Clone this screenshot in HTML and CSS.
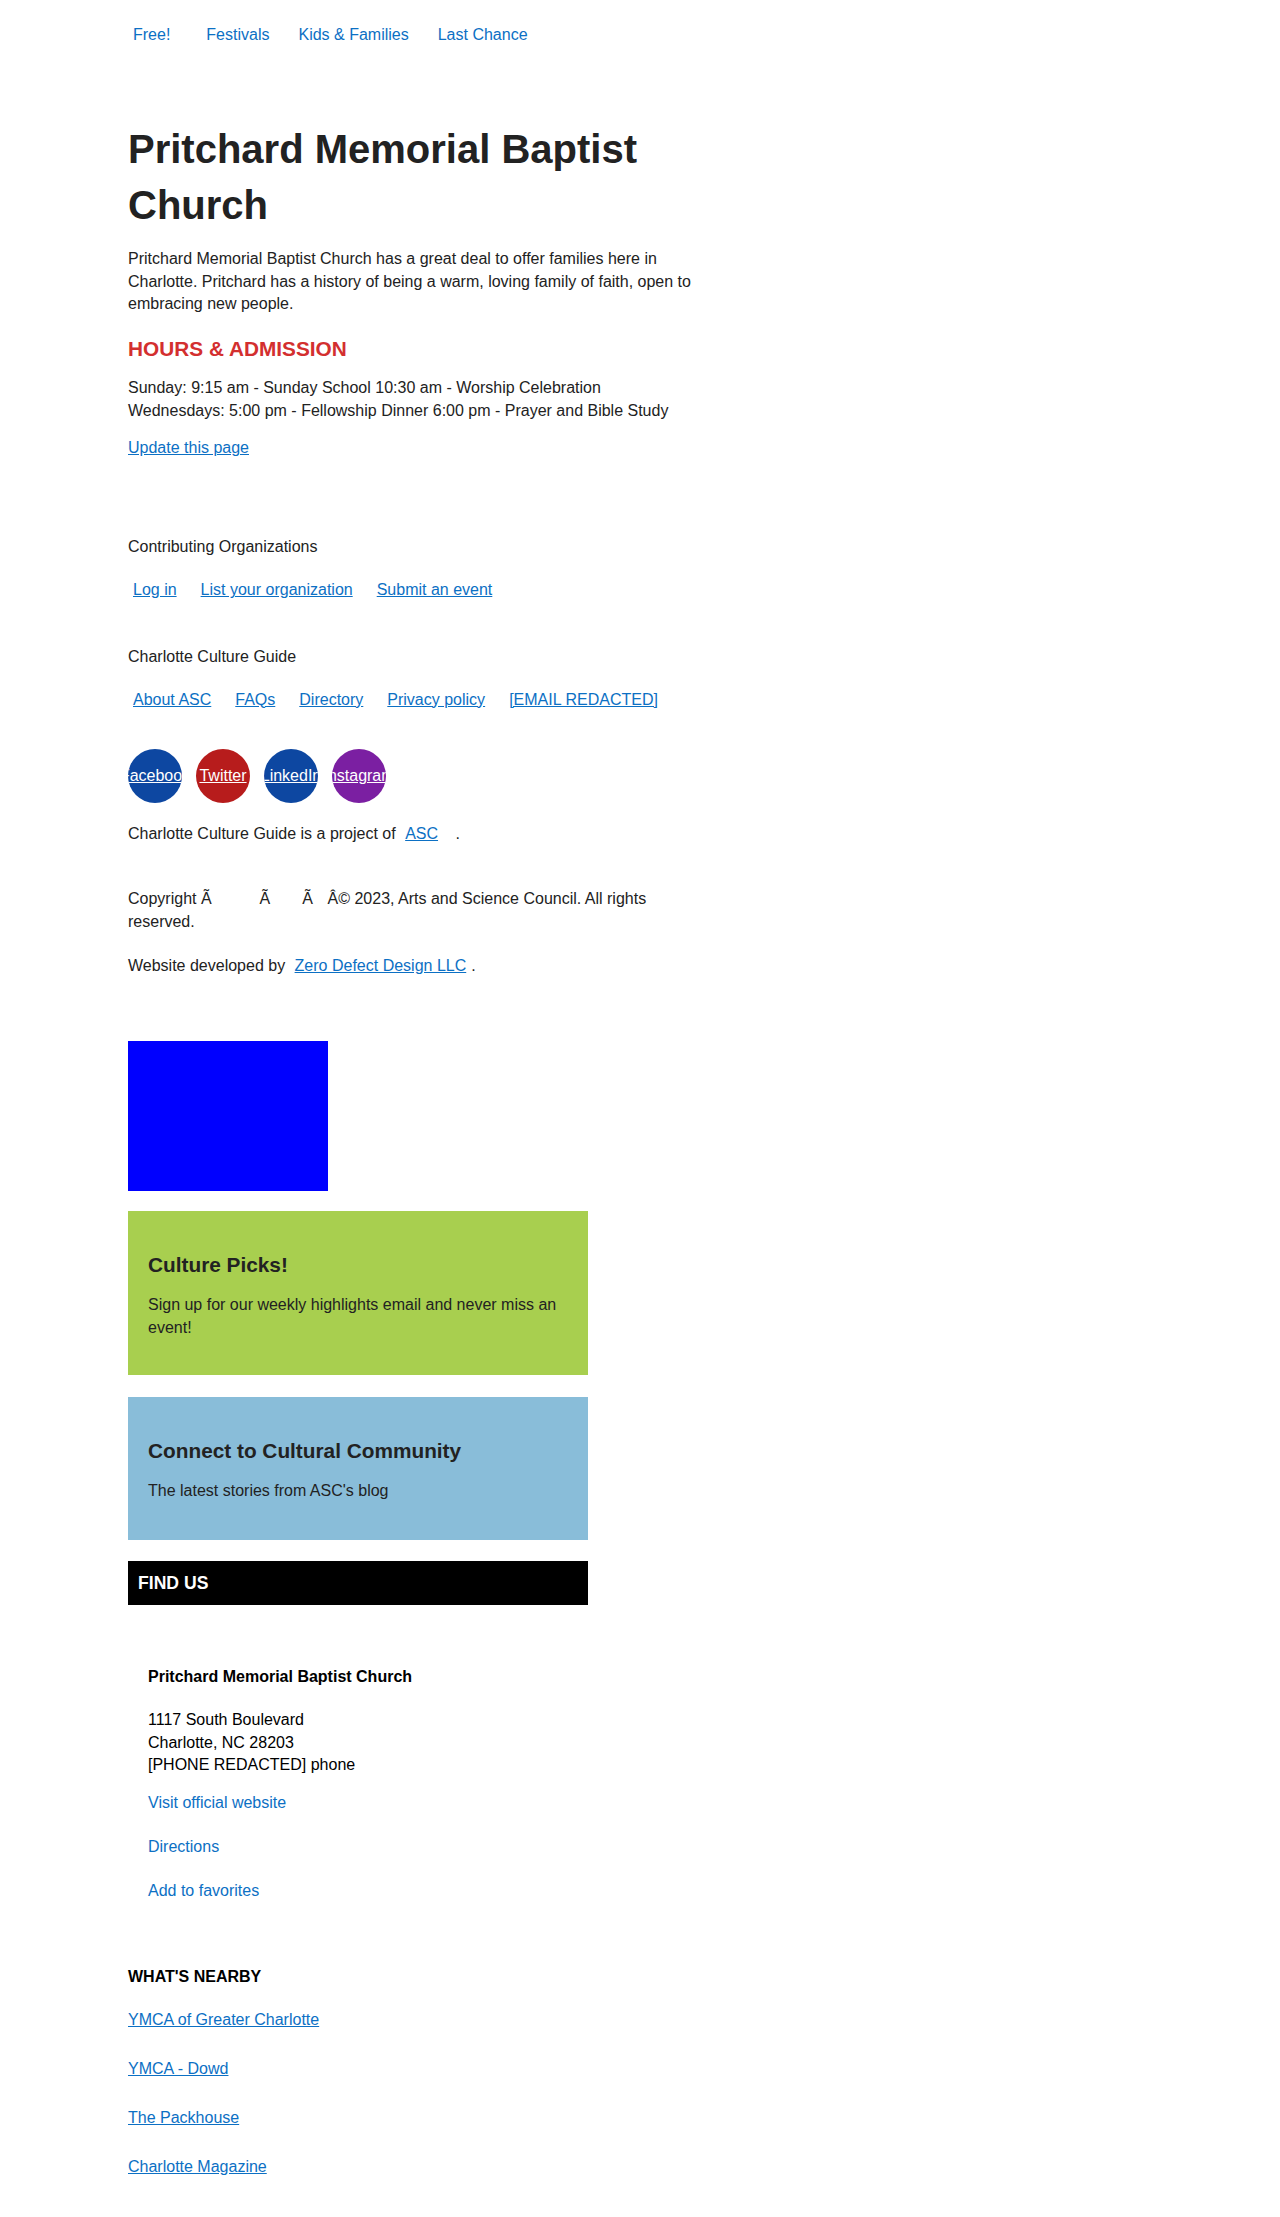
FILE: index.html
```html
<!DOCTYPE html>
<html lang="en">
<head>
<meta charset="utf-8">
<title>Pritchard Memorial Baptist Church - Charlotte Culture Guide</title>
<link rel="stylesheet" href="styles.css">
</head>
<body>
<div class="page">
  <nav class="topnav">
    <ul class="topnav-list">
      <li class="topnav-item topnav-item-first"><a href="#">Free!</a></li>
      <li class="topnav-item"><a href="#">Festivals</a></li>
      <li class="topnav-item"><a href="#">Kids &amp; Families</a></li>
      <li class="topnav-item"><a href="#">Last Chance</a></li>
    </ul>
  </nav>

  <main class="main">
    <h1 class="title">Pritchard Memorial Baptist Church</h1>
    <p class="intro">Pritchard Memorial Baptist Church has a great deal to offer families here in Charlotte. Pritchard has a history of being a warm, loving family of faith, open to embracing new people.</p>
    <h2 class="section-title">HOURS &amp; ADMISSION</h2>
    <p class="hours">Sunday: 9:15 am - Sunday School 10:30 am - Worship Celebration<br>Wednesdays: 5:00 pm - Fellowship Dinner 6:00 pm - Prayer and Bible Study</p>
    <p class="update"><a href="#">Update this page</a></p>
  </main>

  <footer class="site-footer">
    <p class="footer-label footer-label-first">Contributing Organizations</p>
    <ul class="footer-links">
      <li><a href="#">Log in</a></li>
      <li><a href="#">List your organization</a></li>
      <li><a href="#">Submit an event</a></li>
    </ul>
    <p class="footer-label">Charlotte Culture Guide</p>
    <ul class="footer-links">
      <li><a href="#">About ASC</a></li>
      <li><a href="#">FAQs</a></li>
      <li><a href="#">Directory</a></li>
      <li><a href="#">Privacy policy</a></li>
      <li><a href="#">[EMAIL REDACTED]</a></li>
    </ul>
    <ul class="social">
      <li><a class="social-circle social-facebook" href="#"><span>Facebook</span></a></li>
      <li><a class="social-circle social-twitter" href="#"><span>Twitter</span></a></li>
      <li><a class="social-circle social-linkedin" href="#"><span>LinkedIn</span></a></li>
      <li><a class="social-circle social-instagram" href="#"><span>Instagram</span></a></li>
    </ul>
    <p class="project">Charlotte Culture Guide is a project of <a class="inline-link inline-link-asc" href="#">ASC</a> .</p>
    <p class="copyright">Copyright Ã<span class="gap gap-1"></span>Ã<span class="gap gap-2"></span>Ã<span class="gap gap-3"></span>Â© 2023, Arts and Science Council. All rights reserved.</p>
    <p class="developer">Website developed by <a class="inline-link" href="#">Zero Defect Design LLC</a>.</p>
  </footer>

  <aside class="sidebar">
    <div class="ad-box"></div>

    <section class="promo promo-green">
      <h3 class="promo-title">Culture Picks!</h3>
      <p class="promo-text">Sign up for our weekly highlights email and never miss an event!</p>
    </section>

    <section class="promo promo-blue">
      <h3 class="promo-title">Connect to Cultural Community</h3>
      <p class="promo-text">The latest stories from ASC's blog</p>
    </section>

    <section class="find-us">
      <h2 class="find-us-bar">FIND US</h2>
      <div class="find-us-body">
        <h3 class="venue-name">Pritchard Memorial Baptist Church</h3>
        <p class="venue-address">1117 South Boulevard<br>Charlotte, NC 28203<br>[PHONE REDACTED] phone</p>
        <p class="venue-link venue-link-first"><a href="#">Visit official website</a></p>
        <p class="venue-link"><a href="#">Directions</a></p>
        <p class="venue-link"><a href="#">Add to favorites</a></p>
      </div>
    </section>

    <section class="nearby">
      <h3 class="nearby-title">WHAT'S NEARBY</h3>
      <ul class="nearby-list">
        <li><a href="#">YMCA of Greater Charlotte</a></li>
        <li><a href="#">YMCA - Dowd</a></li>
        <li><a href="#">The Packhouse</a></li>
        <li><a href="#">Charlotte Magazine</a></li>
      </ul>
    </section>
  </aside>
</div>
</body>
</html>
```

FILE: styles.css
```css
* {
  box-sizing: border-box;
}

html, body {
  margin: 0;
  padding: 0;
  background: #ffffff;
}

body {
  font-family: "Liberation Sans", Arial, Helvetica, sans-serif;
  font-size: 16px;
  line-height: 22.4px;
  color: #222222;
}

a {
  color: #0c70c4;
}

p, h1, h2, h3, ul {
  margin: 0;
  padding: 0;
}

ul {
  list-style: none;
}

.page {
  padding: 24px 0 38.8px 128px;
}

/* top nav */
.topnav-list {
  display: flex;
  gap: 19px;
}

.topnav-item a {
  display: block;
  padding: 0 5px;
  text-decoration: none;
}

.topnav-item-first {
  margin-right: 7px;
}

/* main */
.main {
  width: 576px;
}

.title {
  margin-top: 75px;
  font-size: 40px;
  line-height: 56px;
  font-weight: bold;
  color: #222222;
}

.intro {
  margin-top: 15px;
}

.section-title {
  margin-top: 20px;
  font-size: 20.8px;
  line-height: 25px;
  font-weight: bold;
  color: #d32f2f;
}

.hours {
  margin-top: 16.5px;
}

.update {
  margin-top: 15px;
}

/* footer */
.site-footer {
  width: 576px;
}

.footer-label {
  margin-top: 44px;
}

.footer-label-first {
  margin-top: 77px;
}

.footer-links {
  display: flex;
  gap: 14px;
  margin-top: 20.5px;
}

.footer-links a {
  padding: 0 5px;
}

.social {
  display: flex;
  gap: 14px;
  margin-top: 38.5px;
}

.social-circle {
  display: flex;
  align-items: center;
  justify-content: center;
  width: 54px;
  height: 54px;
  border-radius: 50%;
  overflow: hidden;
  color: #ffffff;
  white-space: nowrap;
}

.social-circle span {
  flex: none;
}

.social-facebook { background: #0d47a1; }
.social-twitter { background: #b71c1c; }
.social-linkedin { background: #0d47a1; }
.social-instagram { background: #7b1fa2; }

.project {
  margin-top: 20px;
}

.inline-link {
  padding: 0 5px;
}

.inline-link-asc {
  margin-right: 8px;
}

.copyright {
  margin-top: 42.5px;
}

.gap {
  display: inline-block;
}

.gap-1 { width: 48px; }
.gap-2 { width: 32px; }
.gap-3 { width: 14.6px; }

.developer {
  margin-top: 21.5px;
}

/* sidebar */
.sidebar {
  width: 460px;
}

.ad-box {
  margin-top: 64px;
  width: 200px;
  height: 150px;
  background: #0000ff;
}

.promo {
  margin-top: 20px;
  padding: 20px;
}

.promo-green {
  background: #a8cf4f;
}

.promo-blue {
  margin-top: 22px;
  background: #89bdd9;
}

.promo-title {
  margin: 21px 0 17px;
  font-size: 20.8px;
  line-height: 25px;
  font-weight: bold;
  color: #222222;
}

.promo-text {
  margin-bottom: 16px;
}

.promo-blue .promo-text {
  margin-bottom: 18px;
}

.find-us {
  margin-top: 21px;
  color: #000000;
}

.find-us-bar {
  height: 44px;
  padding: 10px;
  background: #000000;
  color: #ffffff;
  font-size: 17.6px;
  line-height: 24px;
  font-weight: bold;
}

.find-us-body {
  padding: 0 20px;
}

.venue-name {
  margin-top: 61px;
  font-size: 16px;
  line-height: 22.4px;
  font-weight: bold;
}

.venue-address {
  margin-top: 20.6px;
}

.venue-link {
  margin-top: 21.6px;
}

.venue-link-first {
  margin-top: 15.5px;
}

.venue-link a {
  text-decoration: none;
}

.nearby {
  color: #000000;
}

.nearby-title {
  margin-top: 63.5px;
  font-size: 16px;
  line-height: 22.4px;
  font-weight: bold;
}

.nearby-list {
  display: flex;
  flex-direction: column;
  gap: 26.6px;
  margin-top: 20.6px;
}
```
